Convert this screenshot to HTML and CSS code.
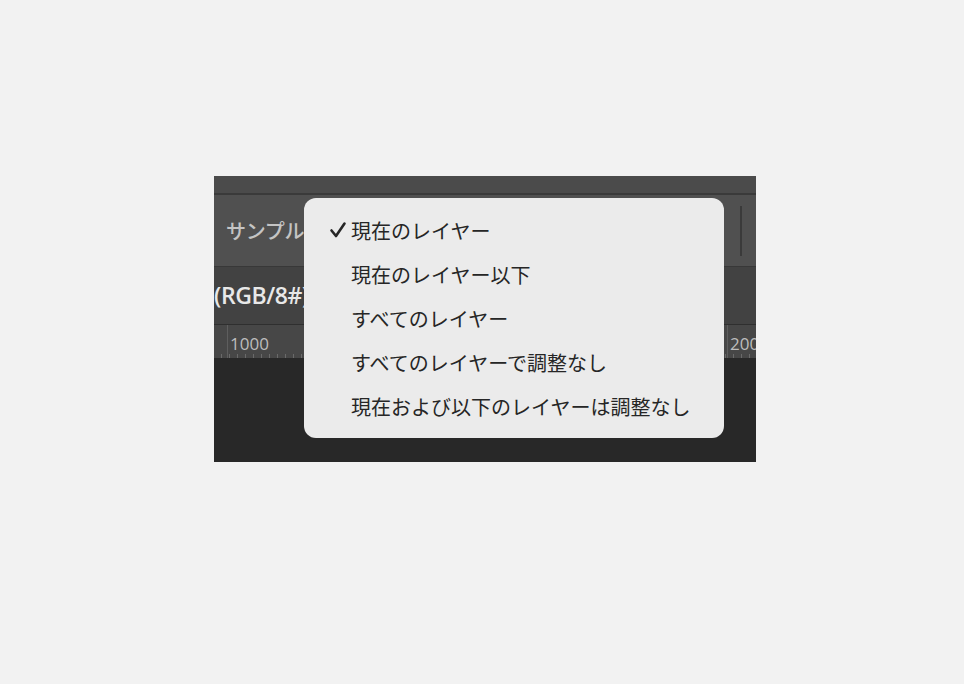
FILE: index.html
```html
<!DOCTYPE html>
<html lang="ja">
<head>
<meta charset="utf-8">
<link rel="stylesheet" href="styles.css">
</head>
<body>
<div class="app">
  <div class="topbar"></div>
  <div class="options">
    <span class="label">サンプル</span>
    <span class="sep"></span>
  </div>
  <div class="tabs"><span class="doc">(RGB/8#)</span></div>
  <div class="ruler">
    <span class="mark m1">1000</span>
    <span class="mark m2">200</span>
  </div>
  <div class="canvas"></div>

  <ul class="menu">
    <li class="item checked">
      <svg class="check" width="18" height="18" viewBox="0 0 18 18"><path d="M2.5 9.5 L7 15 L15.5 2.5" fill="none" stroke="#262626" stroke-width="2.6" stroke-linecap="round" stroke-linejoin="round"/></svg>
      <span>現在のレイヤー</span>
    </li>
    <li class="item"><span>現在のレイヤー以下</span></li>
    <li class="item"><span>すべてのレイヤー</span></li>
    <li class="item"><span>すべてのレイヤーで調整なし</span></li>
    <li class="item"><span>現在および以下のレイヤーは調整なし</span></li>
  </ul>
</div>
</body>
</html>
```

FILE: styles.css
```css
html, body {
  margin: 0;
  padding: 0;
  background: #f2f2f2;
}
body {
  padding: 176px 0 0 214px;
  font-family: "Noto Sans CJK JP", "Noto Sans", sans-serif;
}
.app {
  position: relative;
  width: 542px;
  height: 286px;
  overflow: hidden;
  display: flex;
  flex-direction: column;
  background: #282828;
}
.topbar {
  height: 17px;
  background: #4b4b4b;
  border-bottom: 2px solid #3a3a3a;
  flex: none;
}
.options {
  height: 71px;
  flex: none;
  background: #505050;
  display: flex;
  align-items: center;
  justify-content: space-between;
  padding: 0 14px 0 12px;
  border-bottom: 1px solid #383838;
}
.label {
  color: #c4c4c4;
  font-size: 20px;
  font-weight: 500;
  letter-spacing: -0.3px;
  margin-top: 0;
}
.sep {
  width: 2px;
  height: 50px;
  background: #3a3a3a;
}
.tabs {
  height: 57px;
  flex: none;
  background: #424242;
  border-bottom: 1px solid #2f2f2f;
  display: flex;
  align-items: center;
}
.doc {
  color: #e8e8e8;
  font-family: "Open Sans", "Noto Sans", sans-serif;
  font-weight: 600;
  font-size: 23px;
  letter-spacing: -0.4px;
  margin-top: -2px;
}
.ruler {
  position: relative;
  height: 33px;
  flex: none;
  background-color: #474747;
  background-image: repeating-linear-gradient(to right, transparent 0, transparent 7px, #6a6a6a 7px, #6a6a6a 8px);
  background-size: 100% 4px;
  background-repeat: no-repeat;
  background-position: 0 100%;
}
.mark {
  position: absolute;
  top: 0;
  height: 33px;
  border-left: 1px solid #5e5e5e;
  padding-left: 2px;
  color: #bdbdbd;
  font-family: "Open Sans", "Noto Sans", sans-serif;
  font-size: 17px;
  line-height: 38px;
}
.m1 { left: 13px; }
.m2 { left: 513px; }
.canvas {
  flex: 1;
  background: #282828;
}
.menu {
  position: absolute;
  left: 90px;
  top: 22px;
  width: 420px;
  height: 240px;
  box-sizing: border-box;
  margin: 0;
  padding: 10px 0;
  list-style: none;
  background: #ebebeb;
  border-radius: 12px;
}
.item {
  position: relative;
  height: 44px;
  display: flex;
  align-items: center;
  padding-left: 47px;
  color: #262626;
  font-size: 20px;
  font-weight: 400;
}
.item span {
  margin-top: 1px;
}
.check {
  position: absolute;
  left: 25px;
  top: 13px;
}
```
